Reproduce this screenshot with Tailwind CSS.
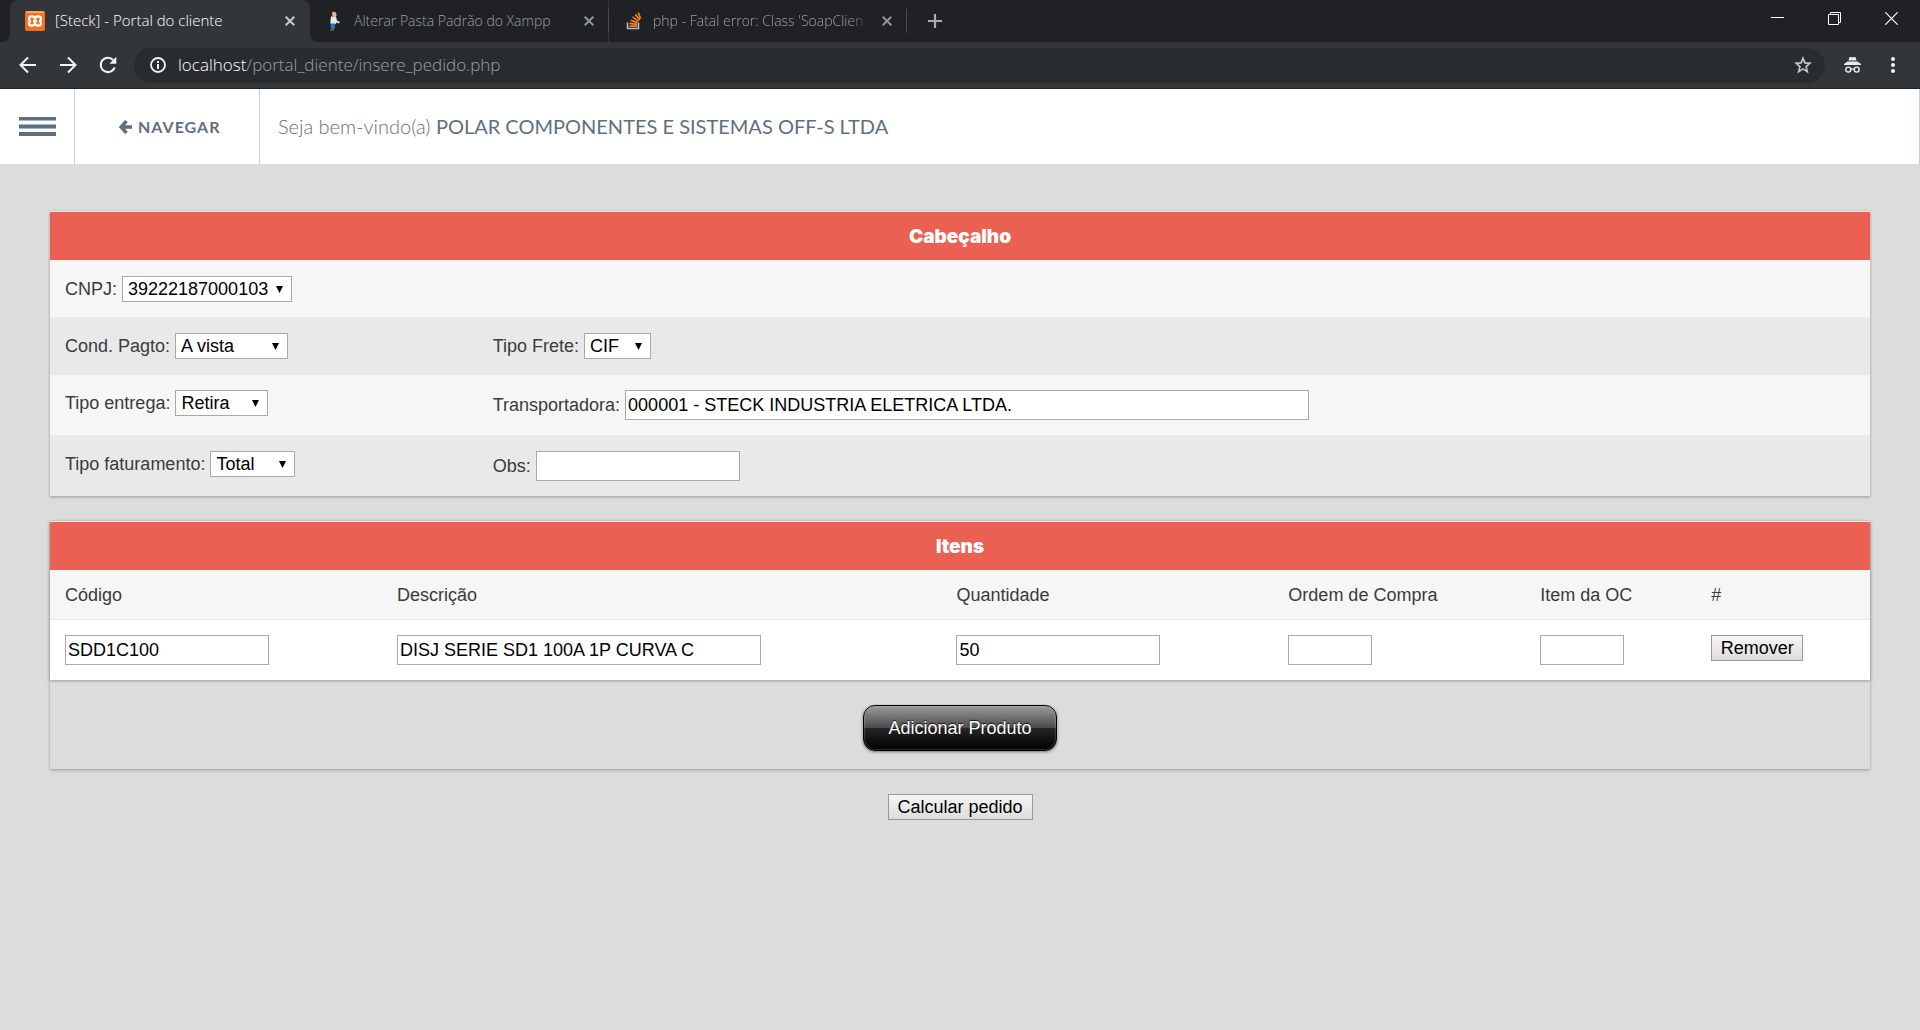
<!DOCTYPE html>
<html lang="pt-BR">
<head>
<meta charset="utf-8">
<title>[Steck] - Portal do cliente</title>
<script src="https://cdn.jsdelivr.net/npm/@tailwindcss/browser@4"></script>
</head>
<body class="min-h-screen bg-[#dcdcdc] font-['Liberation_Sans',Arial,sans-serif] text-lg leading-6 text-[#3b3b3b]">

<!-- Browser window -->
<div class="font-['Open_Sans',sans-serif] font-light">
  <div class="flex h-[42px] items-stretch bg-[#202124] text-sm text-[#9aa0a6]">
    <div class="flex w-[10px] bg-[#323639]"><span class="flex-1 rounded-br-lg bg-[#202124]"></span></div>
    <div class="flex w-[300px] items-center rounded-t-lg bg-[#323639] px-[15px] text-[15px] text-white">
      <svg class="size-5" viewBox="0 0 20 20"><rect width="20" height="20" rx="2" fill="#f3701e"/><rect x="1" width="18" height="2" fill="#f9a56c"/><path d="M10 7.500C9 4.500 4 4.500 4 7.700c0 1.300.7 1.900 1 2.300-.3.400-1 1-1 2.300 0 3.200 5 3.200 6 .2 1 3 6 3 6-.2 0-1.300-.7-1.900-1-2.300.3-.4 1-1 1-2.300 0-3.200-5-3.200-6-.2zM8 10h4" fill="none" stroke="#fff" stroke-width="2.300" stroke-linejoin="round"/></svg>
      <span class="ml-[10px] flex-1 whitespace-nowrap">[Steck] - Portal do cliente</span>
      <button aria-label="Fechar guia"><svg class="size-[10px]" viewBox="0 0 10 10"><path d="M.7.7l8.600 8.600M9.300.7.7 9.300" stroke="#c5c8cb" stroke-width="2"/></svg></button>
    </div>
    <div class="flex w-[299px] bg-[#323639]">
      <div class="flex flex-1 items-center rounded-bl-lg bg-[#202124] pr-[14px] pl-[15px]">
        <svg class="size-5" viewBox="0 0 20 20"><path d="M6 5.500h5l1 4 2.500 1.500-.6 1.500L11 11.500V13H5.500V9z" fill="#e8e8ea"/><path d="M7.500 1c2-.8 4 .5 4 2.500S10.500 6.500 9 6.500 6.500 3 7.500 1z" fill="#e3b49c"/><path d="M5.500 12.500h5l-1 5.500H6z" fill="#1f7cc4"/><path d="M5 18h4v2H5z" fill="#6b4a3e"/><path d="M13.200 10.500h1.600v1.600h-1.600z" fill="#e3b49c"/></svg>
        <span class="ml-[9px] flex-1 whitespace-nowrap">Alterar Pasta Padrão do Xampp</span>
        <button aria-label="Fechar guia"><svg class="size-[10px]" viewBox="0 0 10 10"><path d="M.7.7l8.600 8.600M9.300.7.7 9.300" stroke="#8f959a" stroke-width="2"/></svg></button>
      </div>
      <span class="my-[9px] w-px bg-[#4a4c50]"></span>
    </div>
    <div class="flex w-[297px] items-center pr-[14px] pl-4">
      <svg class="size-5 shrink-0" viewBox="0 0 20 20"><path d="M2.500 11.500v6h11v-6" fill="none" stroke="#bcbbbb" stroke-width="1.600"/><path d="M4.500 15.200h7.500M4.700 12.300l7.400 1M5.600 9.200l7 2.400M7.600 5.900l6 4.200M10.300 3.400l4.600 5.500M13.200 1.500l2.400 6" stroke="#f48024" stroke-width="1.700"/></svg>
      <span class="ml-2 flex-1 mask-r-from-90% whitespace-nowrap">php - Fatal error: Class 'SoapClien</span>
      <button class="ml-[10px]" aria-label="Fechar guia"><svg class="size-[10px]" viewBox="0 0 10 10"><path d="M.7.7l8.600 8.600M9.300.7.7 9.300" stroke="#8f959a" stroke-width="2"/></svg></button>
    </div>
    <span class="my-[9px] w-px bg-[#4a4c50]"></span>
    <button class="ml-5" aria-label="Nova guia"><svg class="size-4" viewBox="0 0 16 16"><path d="M8 1v14M1 8h14" stroke="#a9adb2" stroke-width="2.200"/></svg></button>
    <div class="ml-auto flex items-center gap-11 pr-[22px] pb-[6px]">
      <button aria-label="Minimizar"><svg class="size-[13px]" viewBox="0 0 13 13"><path d="M0 5.500h13" stroke="#fff"/></svg></button>
      <button aria-label="Restaurar"><svg class="size-[13px]" viewBox="0 0 13 13"><path d="M.5 2.500h10v10H.5zM2.500 2.500v-2h10v10h-2" fill="none" stroke="#fff"/></svg></button>
      <button aria-label="Fechar"><svg class="size-[13px]" viewBox="0 0 13 13"><path d="M.3.3l12.400 12.400M12.700.3.3 12.700" stroke="#fff" stroke-width="1.200"/></svg></button>
    </div>
  </div>
  <div class="flex h-[47px] items-center border-b border-[#222427] bg-[#323639] pr-[25px] pl-[19px]">
    <div class="flex gap-[22px]">
      <button aria-label="Voltar"><svg class="size-[18px]" viewBox="0 0 18 18"><path d="M17 9H2M9 1.500 1.500 9 9 16.500" fill="none" stroke="#f1f3f4" stroke-width="2"/></svg></button>
      <button aria-label="Avançar"><svg class="size-[18px]" viewBox="0 0 18 18"><path d="M1 9h15M9 1.500 16.500 9 9 16.500" fill="none" stroke="#f1f3f4" stroke-width="2"/></svg></button>
      <button aria-label="Recarregar"><svg class="size-[18px]" viewBox="0 0 18 18"><path d="M15.700 11.300A7.200 7.200 0 1 1 14.200 4" fill="none" stroke="#f1f3f4" stroke-width="2.100"/><path d="M17.300.8v6.900h-6.900z" fill="#f1f3f4"/></svg></button>
    </div>
    <div class="ml-[17px] flex h-[35px] flex-1 items-center rounded-full bg-[#282c2f] pr-[13px] pl-4">
      <svg class="size-4" viewBox="0 0 16 16"><circle cx="8" cy="8" r="7" fill="none" stroke="#f1f3f4" stroke-width="1.800"/><path d="M8 7v5M8 4v2" stroke="#f1f3f4" stroke-width="2"/></svg>
      <div class="ml-3 flex-1 text-[17px] text-[#9aa0a6]"><span class="text-white">localhost</span>/portal_diente/insere_pedido.php</div>
      <button aria-label="Favoritar"><svg class="size-[18px]" viewBox="0 0 18 18"><path d="M9 2.200l1.900 4.700 5 .4-3.800 3.300 1.200 5L9 12.900l-4.300 2.700 1.200-5L2.100 7.300l5-.4z" fill="none" stroke="#c3c6c9" stroke-width="1.700"/></svg></button>
    </div>
    <svg class="ml-[19px] h-4 w-[17px]" viewBox="0 0 17 16"><path d="M5.500 0h1.800l1.200.5L9.700 0h1.800l1 3.500h-8zM3.500 4.500h10L17 7v1H0V7z" fill="#e8eaed"/><path d="M7 12.500c1-.8 2-.8 3 0" stroke="#e8eaed" fill="none" stroke-width="1.200"/><circle cx="4.300" cy="12.600" r="2.500" fill="none" stroke="#e8eaed" stroke-width="1.400"/><circle cx="12.700" cy="12.600" r="2.500" fill="none" stroke="#e8eaed" stroke-width="1.400"/></svg>
    <button class="ml-[30px]" aria-label="Menu"><svg class="h-4 w-1" viewBox="0 0 4 16"><circle cx="2" cy="2" r="2" fill="#f1f3f4"/><circle cx="2" cy="8" r="2" fill="#f1f3f4"/><circle cx="2" cy="14" r="2" fill="#f1f3f4"/></svg></button>
  </div>
</div>

<!-- Site header -->
<header class="flex h-[75px] items-stretch border-r border-[#c5d0dc] bg-white font-[Lato,sans-serif] text-[#5f6f81]">
  <button class="flex w-[75px] items-center border-r border-[#c5d0dc] pl-[19px]" aria-label="Abrir menu">
    <svg class="h-[19px] w-[37px]" viewBox="0 0 37 19"><path d="M0 0h37v3H0zM0 8h37v3H0zM0 15h37v4H0z" fill="#5f6f81"/><path d="M0 3h37v1H0zM0 7h37v1H0zM0 11h37v1H0z" fill="#aab5c2"/></svg>
  </button>
  <a href="#" class="flex w-[185px] items-center gap-[6px] border-r border-[#c5d0dc] pl-11 text-base font-bold tracking-[1px]">
    <svg class="h-[14px] w-[13px]" viewBox="0 0 13 14"><path d="M7.500 1 2 7l5.500 6M2 7h11" fill="none" stroke="#5f6f81" stroke-width="3.400"/></svg>NAVEGAR
  </a>
  <p class="flex items-center pb-[2px] pl-[18px] text-xl font-light whitespace-pre">Seja bem-vindo(a) <strong class="font-normal">POLAR COMPONENTES E SISTEMAS OFF-S LTDA</strong></p>
</header>

<main class="px-[50px] pt-[47px]">
  <form>
    <table class="w-full table-fixed bg-[#f6f6f6] shadow-[0_1px_3px_rgba(0,0,0,0.3)]">
      <colgroup><col class="w-[23.500%]"><col></colgroup>
      <thead>
        <tr class="bg-[#ea6153]"><th colspan="2" class="h-[49px] border-t border-[#f0e4e4] px-0 pt-[2px] pb-0 font-[Inter,sans-serif] text-[19px] font-black text-white">Cabeçalho</th></tr>
      </thead>
      <tbody>
        <tr class="align-top">
          <td colspan="2" class="border-t border-[#f3f3f3] p-[15px]"><div class="flex items-center gap-[5px]"><label for="cnpj">CNPJ:</label>
            <span class="relative inline-flex"><select id="cnpj" class="h-[26px] w-[170px] appearance-none border border-[#a9a9a9] bg-white pl-[5px] leading-6 text-black"><option>39222187000103</option></select><svg class="pointer-events-none absolute top-[10px] right-[9px] h-[7px] w-[7px]" viewBox="0 0 7 7"><path d="M0 0h7L3.500 7z"/></svg></span></div></td>
        </tr>
        <tr class="bg-[#e9e9e9] align-top">
          <td class="border-t border-[#ebebeb] p-[15px]"><div class="flex items-center gap-[5px]"><label for="pagto">Cond. Pagto:</label>
            <span class="relative inline-flex"><select id="pagto" class="h-[26px] w-[113px] appearance-none border border-[#a9a9a9] bg-white pl-[5px] leading-6 text-black"><option>A vista</option></select><svg class="pointer-events-none absolute top-[10px] right-[9px] h-[7px] w-[7px]" viewBox="0 0 7 7"><path d="M0 0h7L3.500 7z"/></svg></span></div></td>
          <td class="border-t border-[#ebebeb] p-[15px]"><div class="flex items-center gap-[5px]"><label for="frete">Tipo Frete:</label>
            <span class="relative inline-flex"><select id="frete" class="h-[26px] w-[67px] appearance-none border border-[#a9a9a9] bg-white pl-[5px] leading-6 text-black"><option>CIF</option></select><svg class="pointer-events-none absolute top-[10px] right-[9px] h-[7px] w-[7px]" viewBox="0 0 7 7"><path d="M0 0h7L3.500 7z"/></svg></span></div></td>
        </tr>
        <tr class="align-top">
          <td class="border-t border-[#ebebeb] p-[15px]"><div class="flex items-center gap-[5px]"><label for="entrega">Tipo entrega:</label>
            <span class="relative inline-flex"><select id="entrega" class="h-[26px] w-[93px] appearance-none border border-[#a9a9a9] bg-white pl-[5px] leading-6 text-black"><option>Retira</option></select><svg class="pointer-events-none absolute top-[10px] right-[9px] h-[7px] w-[7px]" viewBox="0 0 7 7"><path d="M0 0h7L3.500 7z"/></svg></span></div></td>
          <td class="border-t border-[#ebebeb] p-[15px]"><div class="flex items-center gap-[5px]"><label for="transp">Transportadora:</label>
            <input id="transp" value="000001 - STECK INDUSTRIA ELETRICA LTDA." class="h-[30px] w-[684px] border border-[#a9a9a9] bg-white px-[2px] text-black"></div></td>
        </tr>
        <tr class="bg-[#e9e9e9] align-top">
          <td class="border-t border-[#ebebeb] p-[15px]"><div class="flex items-center gap-[5px]"><label for="fat">Tipo faturamento:</label>
            <span class="relative inline-flex"><select id="fat" class="h-[26px] w-[85px] appearance-none border border-[#a9a9a9] bg-white pl-[5px] leading-6 text-black"><option>Total</option></select><svg class="pointer-events-none absolute top-[10px] right-[9px] h-[7px] w-[7px]" viewBox="0 0 7 7"><path d="M0 0h7L3.500 7z"/></svg></span></div></td>
          <td class="border-t border-[#ebebeb] p-[15px]"><div class="flex items-center gap-[5px]"><label for="obs">Obs:</label>
            <input id="obs" class="h-[30px] w-[204px] border border-[#a9a9a9] bg-white px-[2px] text-black"></div></td>
        </tr>
      </tbody>
    </table>

    <section class="mt-[25px] shadow-[0_1px_3px_rgba(0,0,0,0.3)]">
      <table class="w-full table-fixed bg-white shadow-[0_1px_3px_rgba(0,0,0,0.3)]">
        <colgroup><col class="w-[18.240%]"><col class="w-[30.740%]"><col class="w-[18.240%]"><col class="w-[13.840%]"><col class="w-[9.400%]"><col></colgroup>
        <thead>
          <tr class="bg-[#ea6153]"><th colspan="6" class="h-[49px] border-t border-[#f0e4e4] px-0 pt-[2px] pb-0 font-[Inter,sans-serif] text-[19px] font-black text-white">Itens</th></tr>
          <tr class="bg-[#f6f6f6] text-left">
            <th class="h-[49px] border-t border-[#f3f3f3] px-[15px] py-0 font-normal">Código</th>
            <th class="border-t border-[#f3f3f3] px-[15px] py-0 font-normal">Descrição</th>
            <th class="border-t border-[#f3f3f3] px-[15px] py-0 font-normal">Quantidade</th>
            <th class="border-t border-[#f3f3f3] px-[15px] py-0 font-normal">Ordem de Compra</th>
            <th class="border-t border-[#f3f3f3] px-[15px] py-0 font-normal">Item da OC</th>
            <th class="border-t border-[#f3f3f3] px-[15px] py-0 font-normal">#</th>
          </tr>
        </thead>
        <tbody>
          <tr class="align-top">
            <td class="border-t border-[#ebebeb] p-[15px]"><input aria-label="Código" value="SDD1C100" class="block h-[30px] w-[204px] border border-[#a9a9a9] px-[2px] text-black"></td>
            <td class="border-t border-[#ebebeb] p-[15px]"><input aria-label="Descrição" value="DISJ SERIE SD1 100A 1P CURVA C" class="block h-[30px] w-[364px] border border-[#a9a9a9] px-[2px] text-black"></td>
            <td class="border-t border-[#ebebeb] p-[15px]"><input aria-label="Quantidade" value="50" class="block h-[30px] w-[204px] border border-[#a9a9a9] px-[2px] text-black"></td>
            <td class="border-t border-[#ebebeb] p-[15px]"><input aria-label="Ordem de Compra" class="block h-[30px] w-[84px] border border-[#a9a9a9] px-[2px] text-black"></td>
            <td class="border-t border-[#ebebeb] p-[15px]"><input aria-label="Item da OC" class="block h-[30px] w-[84px] border border-[#a9a9a9] px-[2px] text-black"></td>
            <td class="border-t border-[#ebebeb] p-[15px]"><button type="button" class="block h-[26px] w-[92px] border border-[#999] bg-linear-to-b from-[#f6f6f6] to-[#dddddd] text-black">Remover</button></td>
          </tr>
        </tbody>
      </table>
      <div class="flex justify-center pt-[25px] pb-[18px]">
        <button type="button" class="h-[46px] w-[194px] rounded-xl border border-black bg-[linear-gradient(#9a9a9a,#4a4a4a_50%,#262626_50%,#000)] text-white shadow-[0_1px_3px_rgba(0,0,0,0.5),inset_0_0_2px_rgba(255,255,255,0.5)] text-shadow-[0_-1px_1px_rgba(0,0,0,0.8)]">Adicionar Produto</button>
      </div>
    </section>
    <div class="flex justify-center pt-[25px]">
      <button type="submit" class="h-[26px] w-[145px] border border-[#999] bg-linear-to-b from-[#f6f6f6] to-[#dddddd] text-black">Calcular pedido</button>
    </div>
  </form>
</main>
</body>
</html>
